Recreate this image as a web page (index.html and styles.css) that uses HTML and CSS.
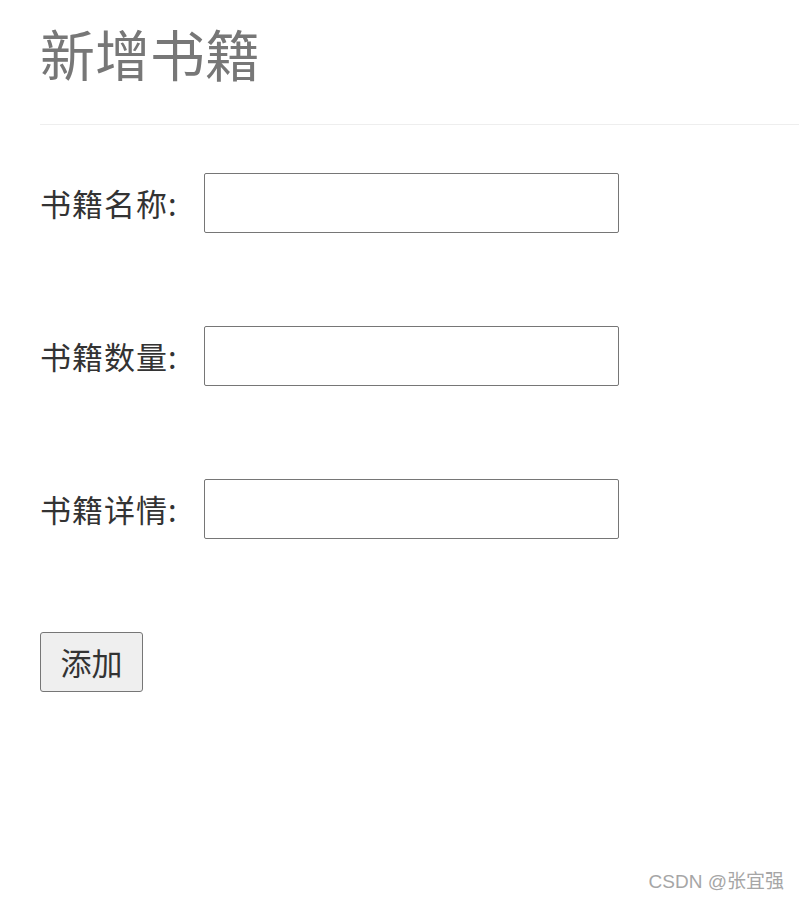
FILE: index.html
```html
<!DOCTYPE html>
<html lang="zh">
<head>
<meta charset="utf-8">
<link rel="stylesheet" href="styles.css">
<title>新增书籍</title>
</head>
<body>
<div class="page">
  <header class="page-header">
    <h1 class="title">新增书籍</h1>
  </header>
  <form class="form">
    <div class="row">
      <label class="label">书籍名称:</label>
      <input class="field" type="text">
    </div>
    <div class="row">
      <label class="label">书籍数量:</label>
      <input class="field" type="text">
    </div>
    <div class="row">
      <label class="label">书籍详情:</label>
      <input class="field" type="text">
    </div>
    <div class="row">
      <button class="btn" type="button">添加</button>
    </div>
  </form>
</div>
<div class="watermark">CSDN @张宜强</div>
</body>
</html>
```

FILE: styles.css
```css
html, body {
  margin: 0;
  padding: 0;
  background: #ffffff;
}
body {
  font-family: "Noto Sans CJK SC", "Noto Sans", sans-serif;
  color: #333333;
  height: 901px;
  position: relative;
  overflow: hidden;
}
.page {
  padding: 0 0 0 40px;
}
.page-header {
  padding-top: 21px;
  padding-bottom: 41px;
  border-bottom: 1px solid #eeeeee;
}
.title {
  margin: 0;
  font-size: 55px;
  line-height: 62px;
  font-weight: 400;
  color: #777777;
  letter-spacing: 0;
}
.form {
  display: flex;
  flex-direction: column;
  gap: 94px;
  padding-top: 48px;
}
.row {
  display: flex;
  align-items: center;
  height: 59px;
}
.label {
  font-size: 31px;
  width: 164px;
  flex: none;
  color: #333333;
  letter-spacing: 1px;
}
.field {
  box-sizing: border-box;
  width: 415px;
  height: 60px;
  border: 1px solid #767676;
  border-radius: 2px;
  margin: 0;
  font-size: 27px;
}
.btn {
  box-sizing: border-box;
  width: 103px;
  height: 60px;
  margin: 0;
  padding: 0;
  background: #efefef;
  border: 1px solid #767676;
  border-radius: 3px;
  font-family: "Noto Sans CJK SC", sans-serif;
  font-size: 31px;
  color: #333333;
}
.watermark {
  position: absolute;
  right: 15px;
  bottom: 8px;
  font-family: "Liberation Sans", "Noto Sans CJK SC", sans-serif;
  font-size: 19px;
  color: #a6a6a6;
}
```
